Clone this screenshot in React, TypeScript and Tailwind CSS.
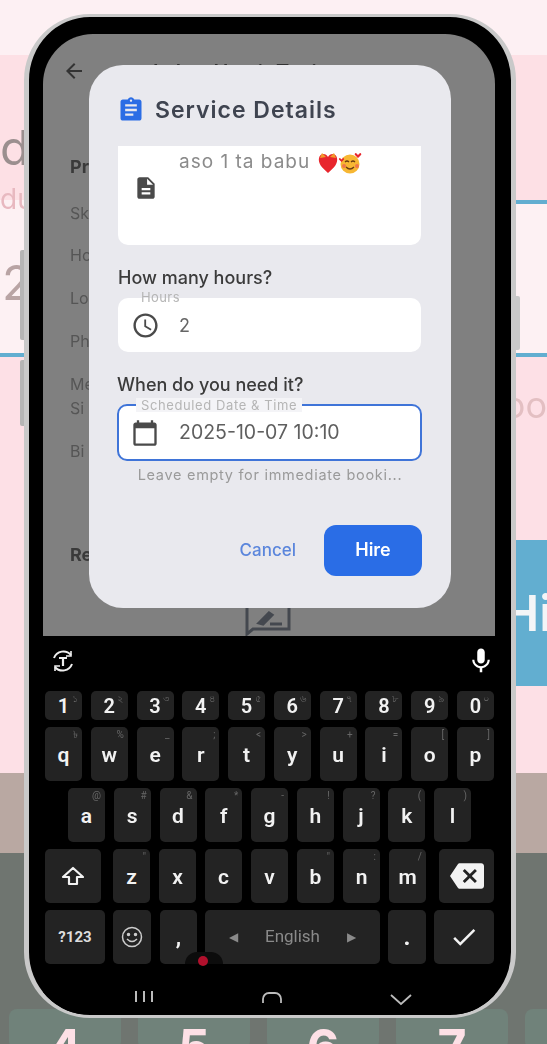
import { MdArrowBack, MdAssignment, MdBackspace, MdCalendarToday, MdCheck, MdDescription, MdMic, MdOutlineAccessTime } from 'react-icons/md';

const numberRow = [['1', '১'], ['2', '২'], ['3', '৩'], ['4', '৪'], ['5', '৫'], ['6', '৬'], ['7', '৭'], ['8', '৮'], ['9', '৯'], ['0', '০']];
const topRow = [['q', '৳'], ['w', '%'], ['e', '_'], ['r', ';'], ['t', '<'], ['y', '>'], ['u', '+'], ['i', '='], ['o', '['], ['p', ']']];
const homeRow = [['a', '@'], ['s', '#'], ['d', '&'], ['f', '*'], ['g', '-'], ['h', '!'], ['j', '?'], ['k', '('], ['l', ')']];
const bottomRow = [['z', '"'], ['x', ''], ['c', ''], ['v', ''], ['b', '"'], ['n', ':'], ['m', '/']];
const behindLabels = [['Sk', 'mt-[22px]'], ['Ho', 'mt-[18px]'], ['Lo', 'mt-[19px]'], ['Ph', 'mt-[19px]'], ['Me', 'mt-[19px]'], ['Si', 'mt-0'], ['Bi', 'mt-[19px]']];

function Key({ label, hint, tall }: { label: string; hint: string; tall?: boolean }) {
    return (
        <div className={`relative w-[37px] rounded-[5px] bg-[#232323] flex justify-center text-[#f2f2f2] font-semibold ${tall ? 'h-[54px] pt-[14px] text-[21px] leading-[28px]' : 'h-[29px] items-center text-[20px]'}`}>
            {label}
            <span className="absolute right-[4px] top-[1px] text-[10px] leading-[14px] font-normal text-[#666]">{hint}</span>
        </div>
    );
}

function Emoji() {
    return (
        <svg width="44" height="22" viewBox="0 0 44 22" className="ml-[8px]">
            <path d="M10 21 C3 15 0 11 1 6 C2 1 8 1 10 5 C12 1 18 1 19 6 C20 11 17 15 10 21Z" fill="#e8262d" />
            <path d="M4 1 L8 5 L2 6Z M16 1 L18 6 L12 5Z" fill="#f39a2a" />
            <circle cx="32" cy="12" r="9.5" fill="#f7b733" />
            <path d="M27 10 q2 -2 4 0 M33 10 q2 -2 4 0" stroke="#6b3d12" strokeWidth="1.2" fill="none" />
            <path d="M28 15 q4 4 8 0" stroke="#6b3d12" strokeWidth="1.3" fill="none" />
            <circle cx="26" cy="14" r="2" fill="#f0764a" />
            <circle cx="39" cy="14" r="2" fill="#f0764a" />
            <path d="M38 1 l2 2 l2 -2 a1.2 1.2 0 0 1 1 2 l-3 3 l-3 -3 a1.2 1.2 0 0 1 1 -2Z" fill="#e8262d" />
            <path d="M22 6 l1.5 1.5 l1.5 -1.5 a1 1 0 0 1 1 1.5 l-2.5 2.5 l-2.5 -2.5 a1 1 0 0 1 1 -1.5Z" fill="#e8262d" />
        </svg>
    );
}

function PhoneScreen() {
    return (
        <div className="relative h-[602px] w-full overflow-hidden rounded-t-[50px] bg-[#808080] font-['Inter',sans-serif] text-[#3d3d3d]">
            <MdArrowBack size={24} className="absolute left-[19px] top-[25px] text-[#333]" />
            <p className="absolute left-[110px] top-[23px] text-[20px] font-semibold text-[#333]">Labor Hamir Tani</p>

            {/* page behind the dialog, only the left edge shows */}
            <div className="pl-[27px] pt-[121px] text-[16px] leading-[24px] text-[#555]">
                <p className="font-bold text-[#3a3a3a] text-[18px]">Pr</p>
                {behindLabels.map(([text, gap]) => (
                    <p key={text} className={gap}>{text}</p>
                ))}
                <p className="mt-[80px] font-bold text-[#3a3a3a] text-[18px]">Re</p>
            </div>
            <svg width="48" height="32" viewBox="0 0 48 32" className="absolute left-[202px] bottom-0 text-[#44484f]" fill="none" stroke="currentColor" strokeWidth="3">
                <path d="M2 0 V30 L8 25 H44 V0" />
                <path d="M14 19 L24 9 L27 11 L18 20Z" fill="currentColor" />
                <path d="M25 20 H37" strokeWidth="3" />
            </svg>

            {/* dialog */}
            <div className="absolute left-[46px] top-[31px] h-[543px] w-[362px] rounded-[34px] bg-[#e9e9ee] px-[29px]">
                <div className="flex items-center h-[24px] mt-[33px]">
                    <MdAssignment size={28} className="text-[#2b6de5] -ml-[1px]" />
                    <h2 className="ml-[10px] text-[23px] font-semibold tracking-[1px] text-[#3f4450]">Service Details</h2>
                </div>

                <div className="mt-[24px] flex h-[99px] w-[303px] rounded-b-[10px] bg-white">
                    <MdDescription size={26} className="ml-[15px] mt-[29px] text-[#4a4a4a]" />
                    <div className="ml-[20px] flex h-[33px] items-center text-[19px] tracking-[1px] text-[#8b8b8b]">
                        aso 1 ta babu
                        <Emoji />
                    </div>
                </div>

                <p className="mt-[21px] h-[24px] text-[18px] font-medium leading-[24px] text-[#3b3b3b]">How many hours?</p>
                <div className="relative mt-[8px] flex h-[54px] w-[303px] items-center rounded-[10px] bg-white">
                    <span className="absolute left-[23px] -top-[8px] text-[13px] leading-[14px] tracking-[0.4px] text-[#b5b5b5]">Hours</span>
                    <MdOutlineAccessTime size={29} className="ml-[13px] text-[#4a4a4a]" />
                    <span className="ml-[19px] text-[18px] text-[#666]">2</span>
                </div>

                <p className="mt-[21px] h-[24px] -ml-[1px] text-[18px] font-medium leading-[24px] text-[#3b3b3b]">When do you need it?</p>
                <div className="relative mt-[7px] -ml-[1px] flex h-[57px] w-[305px] items-center rounded-[10px] border-2 border-[#3f74d8] bg-white">
                    <span className="absolute left-[17px] -top-[8px] bg-[#f4f4f7] px-[5px] text-[13px] leading-[14px] tracking-[0.6px] text-[#b5b5b5]">Scheduled Date &amp; Time</span>
                    <MdCalendarToday size={28} className="ml-[12px] text-[#4a4a4a]" />
                    <span className="ml-[20px] text-[19.5px] text-[#5f5f5f]">2025-10-07 10:10</span>
                </div>
                <p className="mt-[5px] -mx-[4px] text-center text-[14.5px] leading-[18px] tracking-[0.7px] text-[#9a9a9a]">Leave empty for immediate booki...</p>

                <div className="mt-[41px] flex items-center justify-end">
                    <span className="mr-[28px] text-[17px] font-medium text-[#5b86dc]">Cancel</span>
                    <button className="h-[51px] w-[98px] rounded-[12px] bg-[#2a6de6] pb-[2px] text-[18px] font-semibold text-white">Hire</button>
                </div>
            </div>
        </div>
    );
}

function Keyboard() {
    return (
        <div className="flex h-[378px] w-full flex-col bg-black font-['Roboto',sans-serif]">
            <div className="flex h-[55px] items-center justify-between pb-[5px] pl-[8px]">
                <svg width="24" height="24" viewBox="0 0 24 24" fill="none" stroke="#eee" strokeWidth="2">
                    <path d="M3 9 A10 10 0 0 1 20 6 M21 15 A10 10 0 0 1 4 18" />
                    <path d="M20 2 V7 H15 M4 22 V17 H9" strokeWidth="1.6" />
                    <path d="M8 9 H16 M12 9 V17" strokeWidth="2.2" />
                </svg>
                <MdMic size={30} className="-mr-[1px] text-white" />
            </div>
            <div className="flex justify-between pl-[2px] pr-[1px]">
                {numberRow.map(([k, h]) => <Key key={k} label={k} hint={h} />)}
            </div>
            <div className="mt-[7px] flex justify-between pl-[2px] pr-[1px]">
                {topRow.map(([k, h]) => <Key key={k} label={k} hint={h} tall />)}
            </div>
            <div className="mt-[7px] flex justify-between pl-[25px] pr-[24px]">
                {homeRow.map(([k, h]) => <Key key={k} label={k} hint={h} tall />)}
            </div>
            <div className="mt-[7px] flex pl-[2px] pr-[1px]">
                <div className="mr-[12px] flex h-[54px] w-[56px] items-center justify-center rounded-[5px] bg-[#232323]">
                    <svg width="24" height="20" viewBox="0 0 24 20" fill="none" stroke="#f2f2f2" strokeWidth="2.2" strokeLinejoin="round">
                        <path d="M12 2 L22 11 H16 V18 H8 V11 H2Z" />
                    </svg>
                </div>
                <div className="flex w-[313px] justify-between">
                    {bottomRow.map(([k, h]) => <Key key={k} label={k} hint={h} tall />)}
                </div>
                <div className="ml-[13px] flex h-[54px] w-[55px] items-center justify-center rounded-[5px] bg-[#232323]">
                    <MdBackspace size={34} className="text-[#f2f2f2]" />
                </div>
            </div>
            <div className="relative mt-[7px] flex h-[54px] pl-[2px] text-[#f2f2f2]">
                <div className="flex h-full w-[60px] items-center justify-center rounded-[5px] bg-[#232323] text-[15px] font-bold text-[#ddd]">?123</div>
                <div className="ml-[8px] flex h-full w-[38px] items-center justify-center rounded-[5px] bg-[#232323]">
                    <svg width="22" height="22" viewBox="0 0 22 22" fill="none" stroke="#ccc" strokeWidth="1.5">
                        <circle cx="11" cy="11" r="9.5" />
                        <circle cx="7.5" cy="8.5" r="1" fill="#ccc" />
                        <circle cx="14.5" cy="8.5" r="1" fill="#ccc" />
                        <path d="M6 13 q5 5 10 0" />
                    </svg>
                </div>
                <div className="ml-[9px] flex h-full w-[37px] items-center justify-center rounded-[5px] bg-[#232323] text-[22px] font-bold">,</div>
                <div className="ml-[8px] flex h-full w-[175px] items-center justify-between rounded-[5px] bg-[#232323] pl-[24px] pr-[24px] text-[#8a8a8a]">
                    <span className="text-[12px]">◀</span>
                    <span className="text-[17px]">English</span>
                    <span className="text-[12px]">▶</span>
                </div>
                <div className="ml-[8px] flex h-full w-[38px] items-center justify-center rounded-[5px] bg-[#232323] text-[24px] font-bold">.</div>
                <div className="ml-[8px] flex h-full w-[60px] items-center justify-center rounded-[5px] bg-[#232323]">
                    <MdCheck size={30} className="text-[#f2f2f2]" />
                </div>
                {/* assistant bubble sitting on the key edge */}
                <span className="absolute left-[142px] top-[42px] h-[12px] w-[38px] rounded-t-full bg-[#0c0c0c]" />
                <span className="absolute left-[155px] top-[46px] h-[10px] w-[10px] rounded-full bg-[#b0102c]" />
            </div>
            <div className="mt-[24px] flex items-center pl-[91px] text-[#bbb]">
                <svg width="20" height="12" viewBox="0 0 20 12" fill="currentColor"><path d="M1 0h2v11H1zM9 0h2v11H9zM17 0h2v11h-2z" /></svg>
                <svg width="22" height="12" viewBox="0 0 22 12" fill="none" stroke="currentColor" strokeWidth="1.8" className="ml-[107px]"><path d="M2 12 V8 A6 6 0 0 1 8 2 H14 A6 6 0 0 1 20 8 V12" /></svg>
                <svg width="22" height="12" viewBox="0 0 22 12" fill="none" stroke="currentColor" strokeWidth="1.8" className="ml-[107px] mt-[6px]"><path d="M1 1 L11 10 L21 1" /></svg>
            </div>
        </div>
    );
}

export default function App() {
    return (
        <div className="relative h-[1044px] w-[547px] overflow-hidden blur-[0.5px] font-['Inter',sans-serif]">
            {/* blurred page behind the phone */}
            <div className="h-[55px] bg-[#fdf0f3]" />
            <div className="relative z-10 h-[145px] bg-[#fde0e5]">
                <span className="absolute left-0 top-[65px] text-[48px] leading-[56px] text-[#9b8f8f]">d</span>
                <span className="absolute left-0 top-[128px] text-[28px] leading-[32px] text-[#e8b9c0]">du</span>
            </div>
            <div className="relative h-[153px] bg-[#fdf1f3]">
                <div className="absolute right-0 top-0 h-[4px] w-[31px] bg-[#62aed0]" />
                <span className="absolute left-[2px] top-[55px] text-[48px] leading-[56px] text-[#b9a4a4]">2</span>
            </div>
            <div className="h-[4px] bg-[#62aed0]" />
            <div className="relative h-[416px] bg-[#fde0e6]">
                <span className="absolute right-0 top-[28px] text-[36px] leading-[40px] text-[#e3bfc2]">oo</span>
                <div className="absolute right-0 top-[183px] flex h-[146px] w-[31px] items-center overflow-hidden bg-[#62aed0] text-[50px] font-semibold text-[#f3f5f7]">
                    <span className="-ml-[14px] whitespace-nowrap">Hi</span>
                </div>
            </div>
            <div className="h-[80px] bg-[#b9a8a2]" />
            <div className="h-[191px] bg-[#6f7570] pt-[156px]">
                <div className="flex gap-[17px] pl-[9px] text-[50px] font-bold leading-[60px] text-[#fde0e6]">
                    {['4', '5', '6', '7', ''].map(d => (
                        <div key={d} className="h-[40px] w-[112px] shrink-0 rounded-[8px] bg-[#70827a] text-center pt-[8px]">{d}</div>
                    ))}
                </div>
            </div>

            {/* side buttons */}
            <div className="absolute z-20 left-[20px] top-[250px] h-[90px] w-[5px] rounded-l-[2px] bg-[#b5b5b5]" />
            <div className="absolute z-20 left-[20px] top-[360px] h-[66px] w-[5px] rounded-l-[2px] bg-[#b5b5b5]" />
            <div className="absolute z-20 right-[27px] top-[296px] h-[54px] w-[5px] rounded-r-[2px] bg-[#c9c9c9]" />

            {/* phone */}
            <div className="absolute z-20 left-[24px] top-[14px] h-[1004px] w-[492px] overflow-hidden rounded-[66px] border-x-[5px] border-y-[3px] border-[#c9c9c9] bg-black pl-[14px] pr-[16px] pt-[17px]">
                <PhoneScreen />
                <Keyboard />
            </div>
        </div>
    );
}
